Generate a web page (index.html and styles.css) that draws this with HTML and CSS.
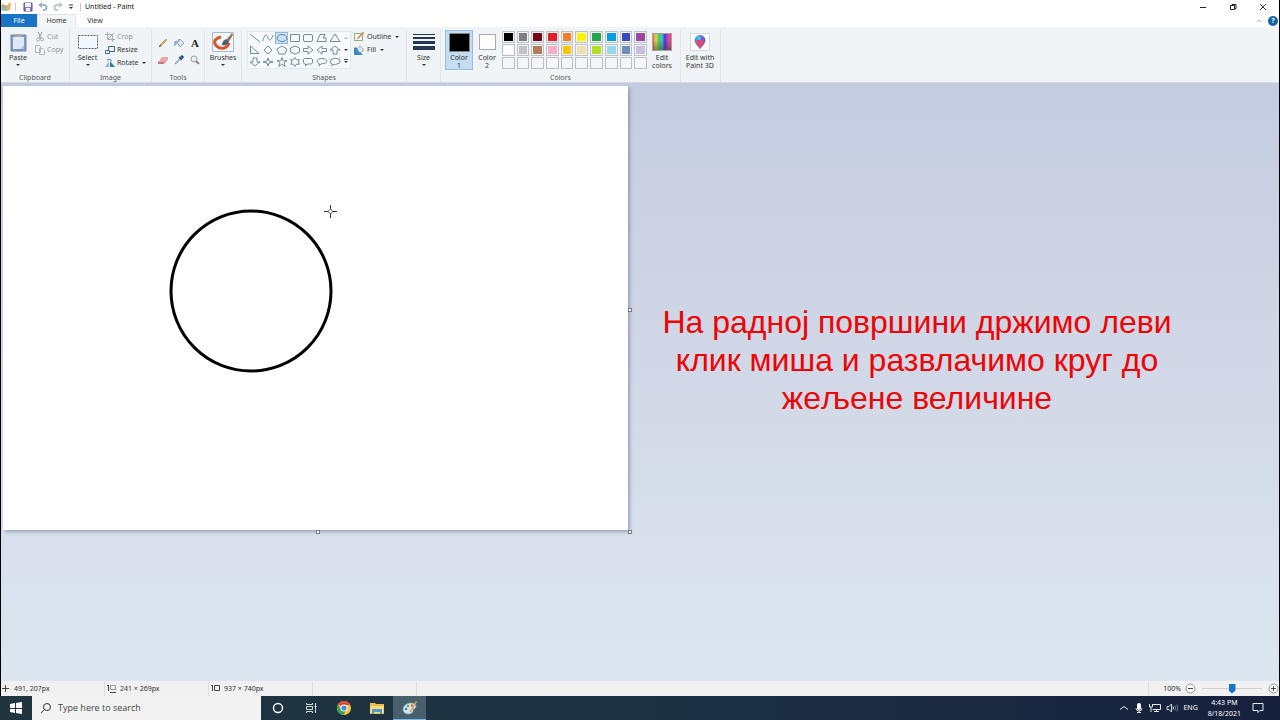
FILE: index.html
```html
<!DOCTYPE html>
<html lang="sr">
<head>
  <meta charset="utf-8">
  <title>Untitled - Paint</title>
  <link rel="stylesheet" href="styles.css">
</head>
<body>
  <div class="window">
    <header class="titlebar">
      <svg class="app-icon" viewBox="0 0 10 10" width="10" height="10"><path d="M0 3h4v6H0z" fill="#a9cfe4"/><path d="M1 3l1-2 1 2v4H1z" fill="#d9a441"/><ellipse cx="5" cy="6" rx="3" ry="3" fill="#8db8cf"/><path d="M5 6l3-5h2l-1 7-3 1z" fill="#e8b55c"/></svg>
      <span class="title-sep"></span>
      <button class="quick" aria-label="Save"><svg viewBox="0 0 10 10" width="10" height="10"><path d="M1 1h8v8H1z" fill="#8a7bc0" stroke="#5c4f96"/><path d="M2 1h6v4H2zM3 6h4v3H3z" fill="#f4f2fb"/></svg></button>
      <button class="quick" aria-label="Undo"><svg viewBox="0 0 10 10" width="10" height="10"><path d="M2 3h4a2.5 2.5 0 010 5H5" fill="none" stroke="#a3b1c9" stroke-width="2"/><path d="M4 0v6L0 3z" fill="#a3b1c9"/></svg></button>
      <button class="quick" aria-label="Redo"><svg viewBox="0 0 10 10" width="10" height="10"><path d="M8 3H4a2.500 2.500 0 000 5h1" fill="none" stroke="#c1c6cd" stroke-width="2"/><path d="M6 0v6l4-3z" fill="#c1c6cd"/></svg></button>
      <button class="quick more" aria-label="Customize"><svg viewBox="0 0 6 6" width="6" height="6"><path d="M1 1h4" stroke="#333"/><path d="M1 3h4L3 5z" fill="#333"/></svg></button>
      <span class="title-sep"></span>
      <h1 class="title">Untitled - Paint</h1>
      <div class="window-buttons">
        <button aria-label="Minimize"><svg viewBox="0 0 8 8" width="8" height="8"><path d="M1 4.500h6" stroke="#222"/></svg></button>
        <button aria-label="Restore"><svg viewBox="0 0 8 8" width="8" height="8"><path d="M1.500 2.500h4v4h-4zM3 2.500v-1h4v4H5.500" fill="none" stroke="#222"/></svg></button>
        <button aria-label="Close"><svg viewBox="0 0 8 8" width="8" height="8"><path d="M1 1l6 6M7 1L1 7" stroke="#222" stroke-width=".9"/></svg></button>
      </div>
    </header>

    <nav class="tabs">
      <button class="tab file">File</button>
      <button class="tab active">Home</button>
      <button class="tab">View</button>
      <div class="tabs-right">
        <button aria-label="Collapse ribbon"><svg viewBox="0 0 6 6" width="6" height="6"><path d="M1 4l2-2 2 2" fill="none" stroke="#999" stroke-width=".8"/></svg></button>
        <button class="help" aria-label="Help">?</button>
      </div>
    </nav>

    <section class="ribbon">
      <div class="group clipboard">
        <div class="tools-row">
          <button class="big"><span class="pic"><svg viewBox="0 0 17 19" width="17" height="19"><path d="M1 2h15v16H1z" fill="#8197c4" stroke="#7383a8"/><path d="M3 4h11v12H3z" fill="#dfe8f5"/><path d="M5 1h7v3H5z" fill="#a4a8b2"/><path d="M10 16l4-4v4z" fill="#b4c3e0"/></svg></span>Paste<i class="caret"></i></button>
          <div class="stack disabled">
            <button><svg viewBox="0 0 10 10" width="10" height="10"><path d="M3 0l3 6M7 0L4 6" stroke="#a5abb3" stroke-width="1.200"/><circle cx="3" cy="7.500" r="1.500" fill="none" stroke="#a5abb3"/><circle cx="7" cy="7.500" r="1.500" fill="none" stroke="#a5abb3"/></svg>Cut</button>
            <button><svg viewBox="0 0 10 10" width="10" height="10"><path d="M.5.500h4l1 1v6h-5zM4.500 3.500h3l2 2v4h-5z" fill="#f2f5f8" stroke="#b1b7bf"/></svg>Copy</button>
          </div>
        </div>
        <span class="group-name">Clipboard</span>
      </div>

      <div class="group image">
        <div class="tools-row">
          <button class="big"><span class="pic"><svg viewBox="0 0 20 14" width="20" height="14"><path d="M.5.500h19v13H.5z" fill="#f2f8fd" stroke="#57616b" stroke-dasharray="2 1"/></svg></span>Select<i class="caret"></i></button>
          <div class="stack">
            <button class="off"><svg viewBox="0 0 10 10" width="10" height="10"><path d="M2.500 0v7.500H10M0 2.500h7.500V10M3 7l6-6" fill="none" stroke="#a9aeb5"/></svg>Crop</button>
            <button><svg viewBox="0 0 10 10" width="10" height="10"><path d="M3.500 1.500h6v5h-6z" fill="#e7f1f8" stroke="#456b83"/><path d="M.5 5.500h4v3h-4z" fill="#fff" stroke="#456b83"/></svg>Resize</button>
            <button><svg viewBox="0 0 10 10" width="10" height="10"><path d="M0 9l4-6v6z" fill="#9eb5c3"/><path d="M5 3l5 6H5z" fill="#397b9f"/><path d="M2 2q3-2 5 1" fill="none" stroke="#397b9f"/></svg>Rotate<i class="caret"></i></button>
          </div>
        </div>
        <span class="group-name">Image</span>
      </div>

      <div class="group tools">
        <div class="tool-grid">
          <button aria-label="Pencil"><svg viewBox="0 0 10 10" width="10" height="10"><path d="M1 9l1-2 6-6 1 1-6 6z" fill="#dba957" stroke="#a77536" stroke-width=".5"/><path d="M1 9l1-2 1 1z" fill="#333"/></svg></button>
          <button aria-label="Fill with color"><svg viewBox="0 0 10 10" width="10" height="10"><path d="M3 4l3-3 4 4-4 4z" fill="#e4ebf0" stroke="#7f929e" stroke-width=".8"/><path d="M4 3Q0 2 0 6q0 3 1 2l3-4z" fill="#7fb2d4"/><path d="M5 4V1" stroke="#7f929e"/></svg></button>
          <button class="text-tool" aria-label="Text">A</button>
          <button aria-label="Eraser"><svg viewBox="0 0 10 10" width="10" height="10"><path d="M0 7l4-5h6L6 7z" fill="#eda7a7"/><path d="M0 7h6v2H0z" fill="#ca7878"/><path d="M6 7l4-5v2L6 9z" fill="#d88e8e"/></svg></button>
          <button aria-label="Color picker"><svg viewBox="0 0 10 10" width="10" height="10"><path d="M1 9l1-2 4-4 1 1-4 4z" fill="#b9d9ec" stroke="#68879c" stroke-width=".6"/><path d="M5 2l3 3M6 3l2-2 1 1-2 2z" fill="none" stroke="#29588c" stroke-width="1.600"/></svg></button>
          <button aria-label="Magnifier"><svg viewBox="0 0 10 10" width="10" height="10"><circle cx="4" cy="4" r="3" fill="#edf6fc" stroke="#96a0a9"/><path d="M6 6l3 3" stroke="#7d7060" stroke-width="1.600"/></svg></button>
        </div>
        <span class="group-name">Tools</span>
      </div>

      <div class="group brushes">
        <div class="tools-row">
          <button class="big"><span class="pic"><svg viewBox="0 0 22 20" width="22" height="20"><path d="M.5.500h21v19H.5z" fill="#f5f8fb" stroke="#a6bccd"/><path d="M9 5Q1 7 3 12q3 5 9 4 4-1 5-5" fill="none" stroke="#d9562f" stroke-width="3"/><path d="M14 8l6-7 1 2-5 8z" fill="#9a744e"/><path d="M10 13q0-4 4-6l3 3q-2 4-7 3z" fill="#46607a"/></svg></span>Brushes<i class="caret"></i></button>
        </div>
        <span class="group-name"></span>
      </div>

      <div class="group shapes">
        <div class="tools-row">
          <div class="gallery">
            <div class="shape-grid">
              <button aria-label="Line"><svg viewBox="0 0 12 10"><path d="M1 1l10 8"/></svg></button>
              <button aria-label="Curve"><svg viewBox="0 0 12 10"><path d="M1 8C3-1 5 2 6 5s3 3 5-3"/></svg></button>
              <button class="picked" aria-label="Oval"><svg viewBox="0 0 12 10"><ellipse cx="6" cy="5" rx="5" ry="3.500"/></svg></button>
              <button aria-label="Rectangle"><svg viewBox="0 0 12 10"><path d="M1.500 1.500h9v7h-9z"/></svg></button>
              <button aria-label="Rounded rectangle"><svg viewBox="0 0 12 10"><rect x="1.500" y="1.500" width="9" height="7" rx="1.500"/></svg></button>
              <button aria-label="Polygon"><svg viewBox="0 0 12 10"><path d="M1 8.500l3-7h5L7 5h3v3.500z"/></svg></button>
              <button aria-label="Triangle"><svg viewBox="0 0 12 10"><path d="M6 1l5 7.500H1z"/></svg></button>
              <button aria-label="Right triangle"><svg viewBox="0 0 12 10"><path d="M1.500 1v7.500H10z"/></svg></button>
              <button aria-label="Diamond"><svg viewBox="0 0 12 10"><path d="M6 1l4 4-4 4-4-4z"/></svg></button>
              <button aria-label="Pentagon"><svg viewBox="0 0 12 10"><path d="M6 1l5 3-2 5H3L1 4z"/></svg></button>
              <button aria-label="Hexagon"><svg viewBox="0 0 12 10"><path d="M6 1l4.500 2v4L6 9 1.500 7V3z"/></svg></button>
              <button aria-label="Right arrow"><svg viewBox="0 0 12 10"><path d="M1.500 3.500H6V1l5 4-5 4V6.500H1.500z"/></svg></button>
              <button aria-label="Left arrow"><svg viewBox="0 0 12 10"><path d="M10.500 3.500H6V1L1 5l5 4V6.500h4.500z"/></svg></button>
              <button aria-label="Up arrow"><svg viewBox="0 0 12 10"><path d="M4 9V5H1l5-4 5 4H8v4z"/></svg></button>
              <button aria-label="Down arrow"><svg viewBox="0 0 12 10"><path d="M4 1v4H1l5 4 5-4H8V1z"/></svg></button>
              <button aria-label="Four-point star"><svg viewBox="0 0 12 10"><path d="M6 1l1 3 4 1-4 1-1 3-1-3-4-1 4-1z"/></svg></button>
              <button aria-label="Five-point star"><svg viewBox="0 0 12 10"><path d="M6 .5l1.200 3.200H11L8 5.800 9.200 9.500 6 7.300 2.800 9.500 4 5.800 1 3.700h3.800z"/></svg></button>
              <button aria-label="Six-point star"><svg viewBox="0 0 12 10"><path d="M6 .5l1.500 2.300h3L9 5l1.500 2.200h-3L6 9.500 4.500 7.200h-3L3 5 1.500 2.800h3z"/></svg></button>
              <button aria-label="Rounded callout"><svg viewBox="0 0 12 10"><path d="M2.500 1.500h7l1 1v3l-1 1.500H5L3.500 9V7h-1l-1-1.500v-3z"/></svg></button>
              <button aria-label="Oval callout"><svg viewBox="0 0 12 10"><path d="M3 9l.5-2.300C-.5 5 1 1.500 6 1.500s6.500 4 2 5q-2 .5-3 .3z"/></svg></button>
              <button aria-label="Cloud callout"><svg viewBox="0 0 12 10"><path d="M3 7Q0 6 1.500 4 1 2 4 2q2-1.500 4-.3 3-.3 3 2Q11 7 8 7 6 8 5 7L3 9z"/></svg></button>
            </div>
            <div class="gallery-scroll">
              <button aria-label="Scroll up"><i class="caret up"></i></button>
              <button aria-label="Scroll down"><i class="caret"></i></button>
              <button aria-label="More shapes"><i class="caret lined"></i></button>
            </div>
          </div>
          <div class="stack">
            <button><svg viewBox="0 0 10 10" width="10" height="10"><path d="M.5 1.500h8v7h-8z" fill="#fff" stroke="#8eaa82"/><path d="M3 7l1-2 5-5 1 1-5 5z" fill="#d8a758" stroke="#8e6b34" stroke-width=".4"/></svg>Outline<i class="caret"></i></button>
            <button><svg viewBox="0 0 10 10" width="10" height="10"><path d="M0 3q3-2 4 2l5 5H0z" fill="#3a88bf"/><path d="M3 4l3-3 4 4-4 3z" fill="#dce6ed" stroke="#7c909e" stroke-width=".7"/></svg>Fill<i class="caret"></i></button>
          </div>
        </div>
        <span class="group-name">Shapes</span>
      </div>

      <div class="group size">
        <div class="tools-row">
          <button class="big"><span class="pic"><svg viewBox="0 0 22 16" width="22" height="16"><path d="M0 0h22v1H0zM0 3h22v2H0zM0 7h22v3H0zM0 12h22v4H0z" fill="#22394f"/></svg></span>Size<i class="caret"></i></button>
        </div>
        <span class="group-name"></span>
      </div>

      <div class="group colors">
        <div class="tools-row">
          <button class="big color-pick selected"><span class="pic"><span class="chip one"></span></span>Color<br>1</button>
          <button class="big color-pick"><span class="pic"><span class="chip two"></span></span>Color<br>2</button>
          <div class="palette">
            <button class="black" aria-label="Black"></button>
            <button class="gray" aria-label="Gray"></button>
            <button class="dark-red" aria-label="Dark red"></button>
            <button class="red" aria-label="Red"></button>
            <button class="orange" aria-label="Orange"></button>
            <button class="yellow" aria-label="Yellow"></button>
            <button class="green" aria-label="Green"></button>
            <button class="turquoise" aria-label="Turquoise"></button>
            <button class="indigo" aria-label="Indigo"></button>
            <button class="purple" aria-label="Purple"></button>
            <button class="white" aria-label="White"></button>
            <button class="light-gray" aria-label="Light gray"></button>
            <button class="brown" aria-label="Brown"></button>
            <button class="rose" aria-label="Rose"></button>
            <button class="gold" aria-label="Gold"></button>
            <button class="light-yellow" aria-label="Light yellow"></button>
            <button class="lime" aria-label="Lime"></button>
            <button class="light-turquoise" aria-label="Light turquoise"></button>
            <button class="blue-gray" aria-label="Blue gray"></button>
            <button class="lavender" aria-label="Lavender"></button>
            <button aria-label="Custom 1"></button>
            <button aria-label="Custom 2"></button>
            <button aria-label="Custom 3"></button>
            <button aria-label="Custom 4"></button>
            <button aria-label="Custom 5"></button>
            <button aria-label="Custom 6"></button>
            <button aria-label="Custom 7"></button>
            <button aria-label="Custom 8"></button>
            <button aria-label="Custom 9"></button>
            <button aria-label="Custom 10"></button>
          </div>
          <button class="big edit"><span class="pic"><span class="spectrum"></span></span>Edit<br>colors</button>
        </div>
        <span class="group-name">Colors</span>
      </div>

      <div class="group paint3d">
        <div class="tools-row">
          <button class="big"><span class="pic"><svg viewBox="0 0 20 18" width="20" height="18"><path d="M.5.500h19v17H.5z" fill="#fff" stroke="#d3d8de"/><path d="M10 16Q4 10 4.500 6.500 6 2 10 2z" fill="#36a5e0"/><path d="M10 16q6-6 5.500-9.500Q14 2 10 2q-3 3 0 6z" fill="#7d5bd0"/><path d="M5 8q5-4 9 1l-4 7z" fill="#e04a78"/><circle cx="9" cy="5" r="2" fill="#4cc2ee"/></svg></span>Edit with<br>Paint 3D</button>
        </div>
        <span class="group-name"></span>
      </div>
    </section>

    <main class="workspace">
      <div class="canvas">
        <svg class="drawing" viewBox="0 0 625 444" width="625" height="444">
          <circle cx="248" cy="205" r="80" fill="none" stroke="#000" stroke-width="3"/>
          <path d="M327.500 119v4.500M327.500 127.500v4.500M321 125.500h4.500M329.500 125.500h4.500" stroke="#333"/>
          <circle cx="327.500" cy="125.500" r="2" fill="#fff" stroke="#555" stroke-width=".8"/>
        </svg>
        <span class="handle right"></span>
        <span class="handle bottom"></span>
        <span class="handle corner"></span>
      </div>
      <p class="caption">На радној површини држимо леви клик миша и развлачимо круг до жељене величине</p>
    </main>

    <footer class="statusbar">
      <div class="status"><svg viewBox="0 0 9 9" width="9" height="9"><path d="M4.500 1v7M1 4.500h7" stroke="#444"/></svg>491, 207px</div>
      <div class="status"><svg viewBox="0 0 9 9" width="9" height="9"><path d="M1.500 1v6M0 1.500h2M3 8.500h6" stroke="#444" fill="none"/><path d="M3.500 1.500h5v4h-5z" fill="none" stroke="#444" stroke-dasharray="1 1"/></svg>241 × 269px</div>
      <div class="status"><svg viewBox="0 0 9 9" width="9" height="9"><path d="M1.500 1v6M0 1.500h2M3.500 1.500h5v5h-5z" fill="none" stroke="#444"/></svg>937 × 740px</div>
      <div class="status"></div>
      <div class="zoom">
        <label for="zoom">100%</label>
        <button aria-label="Zoom out"><svg viewBox="0 0 11 11" width="11" height="11"><circle cx="5.500" cy="5.500" r="4.500" fill="#fff" stroke="#777" stroke-width=".8"/><path d="M3 5.500h5" stroke="#444"/></svg></button>
        <input type="range" id="zoom" min="0" max="100" value="50">
        <button aria-label="Zoom in"><svg viewBox="0 0 11 11" width="11" height="11"><circle cx="5.500" cy="5.500" r="4.500" fill="#fff" stroke="#777" stroke-width=".8"/><path d="M3 5.500h5M5.500 3v5" stroke="#444"/></svg></button>
      </div>
    </footer>
  </div>

  <div class="taskbar">
    <button class="start" aria-label="Start"><svg viewBox="0 0 12 12" width="12" height="12"><path d="M0 2l5-1v5H0zM6 1l6-1v6H6zM0 7h5v4l-5-1zM6 7h6v5l-6-1z" fill="#fff"/></svg></button>
    <label class="search">
      <svg viewBox="0 0 12 12" width="12" height="12"><circle cx="7" cy="5" r="3.500" fill="none" stroke="#333"/><path d="M4.500 7.500L1 11" stroke="#333"/></svg>
      <input type="text" placeholder="Type here to search">
    </label>
    <button class="task" aria-label="Cortana"><svg viewBox="0 0 12 12" width="12" height="12"><circle cx="6" cy="6" r="4.500" fill="none" stroke="#fff" stroke-width="1.400"/></svg></button>
    <button class="task" aria-label="Task view"><svg viewBox="0 0 12 12" width="12" height="12"><path d="M1.500 1v1.500h6V1M1.500 4.500h6v3h-6zM1.500 11V9.500h6V11M10.500 1v10M9.500 4.500h2" fill="none" stroke="#e5eaed" stroke-width=".9"/></svg></button>
    <button class="task" aria-label="Chrome"><svg viewBox="0 0 16 16" width="16" height="16"><circle cx="8" cy="8" r="7" fill="#f5c73d"/><path d="M8 8L2 4.300A7 7 0 0114.300 5H8z" fill="#dd4b3e"/><path d="M2 4.300A7 7 0 007.500 15l3-5.500H5z" fill="#3e9f55"/><circle cx="8" cy="8" r="3.500" fill="#fff"/><circle cx="8" cy="8" r="2.600" fill="#4688e5"/></svg></button>
    <button class="task" aria-label="File Explorer"><svg viewBox="0 0 16 14" width="16" height="14"><path d="M1 2h5l1 1h8v10H1z" fill="#f0bd4c"/><path d="M1 5h14v7H1z" fill="#ffdc76"/><path d="M3 8h10v5h-2v-2H5v2H3z" fill="#4c9bd4"/></svg></button>
    <button class="task running" aria-label="Paint"><svg viewBox="0 0 16 16" width="16" height="16"><path d="M1 9q1-5 7-6 6 0 6 4-1 2-3 2 1 4-4 5-6 0-6-5z" fill="#d5e6ee" stroke="#8badbb" stroke-width=".6"/><circle cx="4" cy="9" r="1.300" fill="#4b7ec0"/><circle cx="6" cy="6" r="1.200" fill="#54a45b"/><circle cx="10" cy="5.500" r="1.200" fill="#d25a43"/><path d="M7 12l7-11 1 1-6 10z" fill="#dda74c"/></svg></button>
    <div class="tray">
      <button aria-label="Hidden icons"><svg viewBox="0 0 10 10" width="10" height="10"><path d="M1 6.500l4-3 4 3" fill="none" stroke="#e9edf2"/></svg></button>
      <button aria-label="Microphone"><svg viewBox="0 0 10 10" width="10" height="10"><rect x="3" y="0" width="4" height="7" rx="2" fill="#fff"/><path d="M2 5q0 3 3 3t3-3M5 8v2M3 9.500h4" fill="none" stroke="#dce1e8"/></svg></button>
      <button aria-label="Network"><svg viewBox="0 0 12 10" width="12" height="10"><path d="M3.500 1.500h8v5h-8M5 8.500h5M7.500 6.500v2M.5 1v3h3V1M2 4v5" fill="none" stroke="#e5e9ef"/></svg></button>
      <button aria-label="Volume"><svg viewBox="0 0 12 10" width="12" height="10"><path d="M1 3.500h2l2.500-2.500v8L3 6.500H1z" fill="none" stroke="#e5e9ef" stroke-width=".9"/><path d="M7 3.500q1 1.500 0 3" fill="none" stroke="#e5e9ef"/><path d="M9 2.500q1.500 2.500 0 5M11 1.500q1.500 3.500 0 7" fill="none" stroke="#68748a"/></svg></button>
      <button class="lang">ENG</button>
      <button class="clock">4:43 PM<br>8/18/2021</button>
      <button class="notify" aria-label="Notifications"><svg viewBox="0 0 12 12" width="12" height="12"><path d="M1 1.500h10v7H8l-2 2v-2H1z" fill="none" stroke="#e9edf2"/></svg></button>
    </div>
  </div>
</body>
</html>
```
FILE: styles.css
```css
* {
  box-sizing: border-box;
}

body {
  margin: 0;
  min-height: 100vh;
  display: flex;
  flex-direction: column;
  background: #000;
  color: #333;
  font: 7px/8px "Noto Sans", "Open Sans", sans-serif;
}

button {
  display: flex;
  align-items: center;
  justify-content: center;
  margin: 0;
  padding: 0;
  border: none;
  background: none;
  color: inherit;
  font: inherit;
  cursor: pointer;
}

svg {
  display: block;
  flex: none;
}

.window {
  flex: 1;
  display: flex;
  flex-direction: column;
  margin: 0 1px;
  background: #fff;
}

/* title bar */
.titlebar {
  display: flex;
  align-items: center;
  height: 14px;
}

.title-sep {
  width: 1px;
  height: 8px;
  margin: 0 4px;
  background: #c5c9cc;
}

.quick {
  width: 15px;
}

.quick.more {
  width: 11px;
}

.title {
  flex: 1;
  margin: 0;
  color: #111;
  font-size: 7px;
  font-weight: normal;
}

.window-buttons {
  display: flex;
  padding-right: 1px;
}

.window-buttons button {
  width: 30px;
  height: 12px;
}

/* tabs */
.tabs {
  display: flex;
  height: 13px;
}

.tab {
  width: 38px;
}

.tab.file {
  width: 36px;
  background: #1a73c4;
  color: #fff;
}

.tab.active {
  width: 39px;
  background: #f3f6f8;
  border: 1px solid #e0e4e8;
  border-bottom: none;
}

.tabs-right {
  display: flex;
  align-items: center;
  gap: 6px;
  margin-left: auto;
  padding-right: 1px;
}

.help {
  width: 10px;
  height: 10px;
  border-radius: 50%;
  background: #1465a8;
  color: #fff;
  font-weight: bold;
}

/* ribbon */
.ribbon {
  display: flex;
  height: 56px;
  padding-top: 3px;
  background: #f1f4f6;
  border-bottom: 1px solid #d5dae2;
}

.group {
  display: flex;
  flex-direction: column;
  flex: none;
  border-right: 1px solid #e1e5e8;
}

.clipboard { width: 69px; }
.image { width: 82px; }
.tools { width: 53px; }
.brushes { width: 37px; }
.shapes { width: 165px; }
.size { width: 34px; }
.colors { width: 240px; }
.paint3d { width: 40px; }

.tools-row {
  display: flex;
  height: 40px;
}

.group-name {
  margin-top: 4px;
  text-align: center;
  color: #555;
}

.big {
  display: block;
  width: 34px;
  height: 40px;
  text-align: center;
  white-space: nowrap;
}

.pic {
  display: flex;
  align-items: center;
  justify-content: center;
  height: 24px;
}

.caret {
  display: inline-block;
  border: 2px solid transparent;
  border-top-color: #333;
  border-bottom: none;
}

.big .caret {
  display: block;
  width: 4px;
  margin: 2px auto 4px;
}

.stack {
  display: flex;
  flex-direction: column;
  gap: 5px;
  padding-top: 3px;
}

.stack button {
  justify-content: flex-start;
  gap: 2px;
  height: 8px;
}

.stack .caret {
  margin-left: 1px;
}

.disabled,
.off {
  color: #8f9499;
}

.image .big {
  width: 35px;
}

.brushes .big {
  width: 36px;
}

.tool-grid {
  display: grid;
  grid-template-columns: repeat(3, 16px);
  grid-template-rows: 17px 17px;
  height: 40px;
  padding: 4px 0 0 3px;
}

.text-tool {
  color: #222;
  font: bold 11px/12px "Liberation Serif", serif;
}

/* shapes gallery */
.gallery {
  display: flex;
  width: 104px;
  height: 38px;
  margin: 1px 3px 0 5px;
  border: 1px solid #e0e9f0;
  background: #f7fafc;
}

.shape-grid {
  flex: 1;
  display: grid;
  grid-template-columns: repeat(7, 1fr);
  grid-template-rows: repeat(3, 12px);
}

.shape-grid svg {
  width: 12px;
  height: 10px;
  fill: none;
  stroke: #50708a;
  stroke-width: .8;
}

.shape-grid .picked {
  background: #c8e0f4;
  outline: 1px solid #8cb9dd;
  outline-offset: -1px;
}

.gallery-scroll {
  display: grid;
  grid-template-rows: repeat(3, 12px);
  width: 8px;
}

.caret.up {
  border-top: none;
  border-bottom: 2px solid #b0b5ba;
}

.caret.lined {
  position: relative;
}

.caret.lined::before {
  content: "";
  position: absolute;
  left: -2px;
  top: -4px;
  width: 4px;
  height: 1px;
  background: #444;
}

.shapes .stack button {
  gap: 3px;
}

/* colors */
.colors .tools-row {
  padding-left: 4px;
}

.color-pick {
  width: 28px;
}

.color-pick.selected {
  background: #c5ddf3;
  border: 1px solid #98bfe3;
}

.selected .pic {
  height: 23px;
}

.chip {
  width: 17px;
  height: 16px;
  border: 1px solid #aaa;
  background: #fff;
}

.chip.one {
  width: 21px;
  height: 19px;
  border: 1px solid #7c8288;
  background: #000;
}

.palette {
  display: grid;
  grid-template-columns: repeat(10, 1fr);
  grid-template-rows: repeat(3, 12px);
  gap: 1px 2px;
  width: 145px;
  margin: 1px 1px 0;
}

.palette button {
  padding: 1px;
  border: 1px solid #bec2c6;
  background: #f4f6f8 content-box;
}

.palette .black { background-color: #000; }
.palette .gray { background-color: #7f7f7f; }
.palette .dark-red { background-color: #780013; }
.palette .red { background-color: #e51d25; }
.palette .orange { background-color: #fb7d26; }
.palette .yellow { background-color: #fff200; }
.palette .green { background-color: #22a74b; }
.palette .turquoise { background-color: #009fe3; }
.palette .indigo { background-color: #3c47c3; }
.palette .purple { background-color: #9c48a1; }
.palette .white { background-color: #fff; }
.palette .light-gray { background-color: #c3c3c3; }
.palette .brown { background-color: #b67b5a; }
.palette .rose { background-color: #fbabc6; }
.palette .gold { background-color: #fdc40e; }
.palette .light-yellow { background-color: #ece1ae; }
.palette .lime { background-color: #b3df20; }
.palette .light-turquoise { background-color: #99d7e8; }
.palette .blue-gray { background-color: #6e8fbc; }
.palette .lavender { background-color: #c8bee4; }

.edit {
  width: 28px;
}

.spectrum {
  width: 20px;
  height: 18px;
  border: 1px solid #a3a3a3;
  background:
    linear-gradient(transparent 40%, rgba(60, 60, 60, .5)),
    linear-gradient(90deg, #e56b52, #dedb45, #4cc951, #3fc4d8, #4436c5, #d840b7, #dc5064);
}

.paint3d .big {
  width: 38px;
}

/* drawing area */
.workspace {
  flex: 1;
  display: flex;
  align-items: flex-start;
  padding: 3px 2px;
  background: linear-gradient(#c4cce0, #d0d7e6 45%, #dce6f0);
}

.canvas {
  position: relative;
  flex: none;
  background: #fff;
  box-shadow: 2px 2px 3px rgba(100, 110, 145, .5);
}

.handle {
  position: absolute;
  width: 4px;
  height: 4px;
  border: 1px solid #778;
  background: #fff;
}

.handle.right {
  right: -4px;
  top: 50%;
}

.handle.bottom {
  bottom: -4px;
  left: 50%;
}

.handle.corner {
  right: -4px;
  bottom: -4px;
}

.caption {
  max-width: 520px;
  margin: 217px 0 0 29px;
  color: #f00000;
  font: 32px/38px "Liberation Sans", Arial, sans-serif;
  text-align: center;
}

/* status bar */
.statusbar {
  display: flex;
  height: 15px;
  background: #f1f1f1;
  color: #333;
}

.status {
  display: flex;
  align-items: center;
  gap: 4px;
  width: 104px;
  border-right: 1px solid #dedede;
}

.status + .status {
  padding-left: 2px;
}

.zoom {
  display: flex;
  align-items: center;
  gap: 4px;
  margin-left: auto;
  padding-left: 14px;
  border-left: 1px solid #dedede;
}

.zoom input {
  width: 60px;
  height: 11px;
  margin: 0 2px;
  appearance: none;
  background: linear-gradient(#cdcdcd, #cdcdcd) center / 100% 1px no-repeat;
}

.zoom input::-webkit-slider-thumb {
  appearance: none;
  width: 7px;
  height: 10px;
  background: #1874c5;
  clip-path: polygon(0 0, 100% 0, 100% 70%, 50% 100%, 0 70%);
}

/* taskbar */
.taskbar {
  display: flex;
  height: 24px;
  background: linear-gradient(90deg, #20353e, #1d3143 50%, #17213d);
  color: #fff;
}

.start {
  width: 32px;
}

.search {
  display: flex;
  align-items: center;
  gap: 6px;
  width: 229px;
  padding-left: 8px;
  background: #f3f3f3;
}

.search input {
  flex: 1;
  min-width: 0;
  padding: 0;
  border: none;
  background: none;
  font: 9px/12px "Open Sans", "Noto Sans", sans-serif;
}

.search input::placeholder {
  color: #444;
}

.task {
  width: 33px;
}

.task.running {
  background: #48606c;
  border-bottom: 1px solid #76b9ed;
}

.tray {
  display: flex;
  align-items: center;
  gap: 5px;
  margin-left: auto;
  padding-right: 16px;
}

.clock {
  display: block;
  height: 24px;
  margin: 0 6px 0 5px;
  line-height: 11px;
  text-align: center;
}
```
